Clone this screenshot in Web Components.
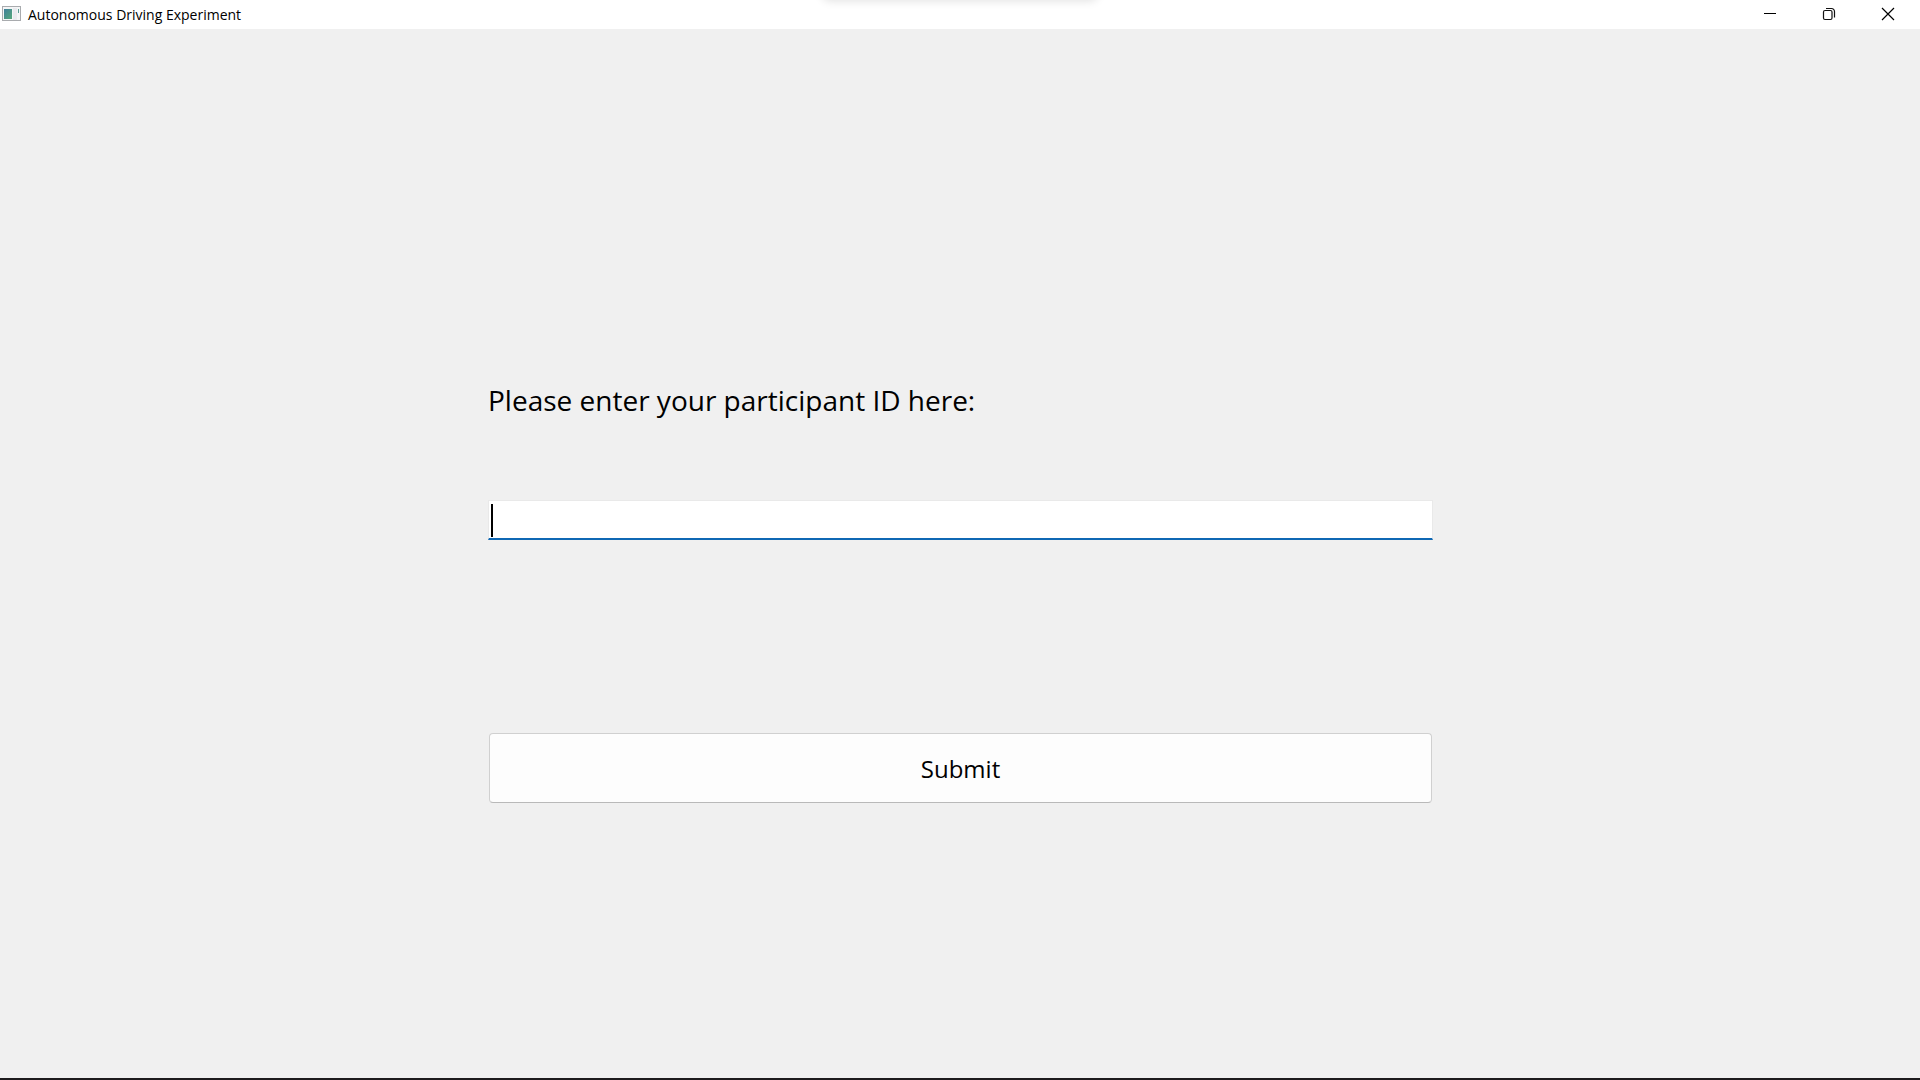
<!DOCTYPE html>
<html lang="en">
<head>
<meta charset="utf-8">
<title>Autonomous Driving Experiment</title>
<style>
  html, body { margin: 0; height: 100%; }
  body { font-family: "Open Sans", "Noto Sans", sans-serif; color: #000; background: #f0f0f0; overflow: hidden; }
</style>
</head>
<body>
<app-window>
  <title-bar slot="title">Autonomous Driving Experiment</title-bar>
  <participant-form></participant-form>
</app-window>

<script>
class Base extends HTMLElement {
  constructor() {
    super();
    this.attachShadow({ mode: "open" }).innerHTML = this.constructor.markup;
  }
}

class AppWindow extends Base {
  static markup = `
    <style>
      :host { display: flex; flex-direction: column; height: 100vh; box-sizing: border-box; border-bottom: 2px solid #1d1b1d; background: #f0f0f0; }
      main { flex: 1; display: grid; grid-template-rows: 352fr auto 275fr; grid-template-columns: 1fr; padding: 0 487px 0 488px; padding: 0 calc(25% + 7px) 0 calc(25% + 8px); }
      ::slotted(participant-form) { grid-row: 2; }
    </style>
    <slot name="title"></slot>
    <main><slot></slot></main>`;
}

class TitleBar extends Base {
  static markup = `
    <style>
      :host { display: flex; align-items: flex-start; justify-content: space-between; height: 29px; background: #fff; position: relative; overflow: hidden; }
      .shade { position: absolute; left: 50%; top: -20px; width: 276px; height: 20px; margin-left: -138px; border-radius: 8px; box-shadow: 0 1px 10px rgba(0,0,0,.12); }
      .name { display: flex; align-items: center; gap: 7px; padding-left: 2px; font-size: 14px; line-height: 29px; white-space: nowrap; }
      .tools { display: flex; padding-right: 3px; }
      button { width: 59px; height: 28px; padding: 0; border: 0; background: none; display: grid; place-items: center; }
      svg { display: block; }
      .name svg { margin-bottom: 1px; }
    </style>
    <div class="shade"></div>
    <div class="name">
      <svg width="19" height="16" viewBox="0 0 19 16" aria-hidden="true">
        <defs><linearGradient id="g" x1="0" y1="0" x2="1" y2="1"><stop offset="0" stop-color="#3f7f9b"/><stop offset="1" stop-color="#55a87a"/></linearGradient></defs>
        <rect x=".5" y=".5" width="18" height="14" fill="#f4f5f6" stroke="#a9abae"/>
        <rect x="2" y="3" width="8" height="10" fill="url(#g)"/>
        <rect x="11" y="2" width="4" height="12" fill="#e9eaee"/>
        <rect x="16" y="3" width="1" height="4" fill="#5b9c95"/>
      </svg>
      <span><slot></slot></span>
    </div>
    <div class="tools">
      <button type="button" aria-label="Minimize"><svg width="14" height="14" fill="none" stroke="#000"><path d="M1 6.5h12"/></svg></button>
      <button type="button" aria-label="Restore"><svg width="14" height="14" fill="none" stroke="#111" stroke-width="1.2"><rect x="1.5" y="3.5" width="8.5" height="9" rx="1.5"/><path d="M4 1.5h5.500a3 3 0 0 1 3 3V10.500"/></svg></button>
      <button type="button" aria-label="Close"><svg width="14" height="14" fill="none" stroke="#000" stroke-width="1.2"><path d="M1 1l12 12M13 1L1 13"/></svg></button>
    </div>`;
}

class ParticipantForm extends Base {
  static markup = `
    <style>
      :host { display: block; }
      form { display: flex; flex-direction: column; margin: 0; }
      label { font-size: 28px; line-height: 38px; white-space: nowrap; }
      .field { position: relative; margin-top: 81px; }
      input { display: block; width: 100%; height: 40px; box-sizing: border-box; padding: 0 4px; border: 1px solid #e9e9e9; border-bottom: 2px solid #0f68b4; border-radius: 0; background: #fff; font: inherit; font-size: 24px; outline: none; caret-color: transparent; }
      .caret { position: absolute; left: 3px; top: 4px; width: 2px; height: 33px; background: #000; }
      button { height: 70px; margin: 193px 1px 0; padding: 2px 0 0; border: 1px solid #d0d0d0; border-bottom-color: #b9b9b9; border-radius: 4px; background: #fdfdfd; color: #000; font: inherit; font-size: 24px; line-height: 32px; }
    </style>
    <form>
      <label for="pid">Please enter your participant ID here:</label>
      <div class="field"><input id="pid" type="text" autocomplete="off"><span class="caret"></span></div>
      <button type="button">Submit</button>
    </form>`;
}

customElements.define("app-window", AppWindow);
customElements.define("title-bar", TitleBar);
customElements.define("participant-form", ParticipantForm);
</script>
</body>
</html>
